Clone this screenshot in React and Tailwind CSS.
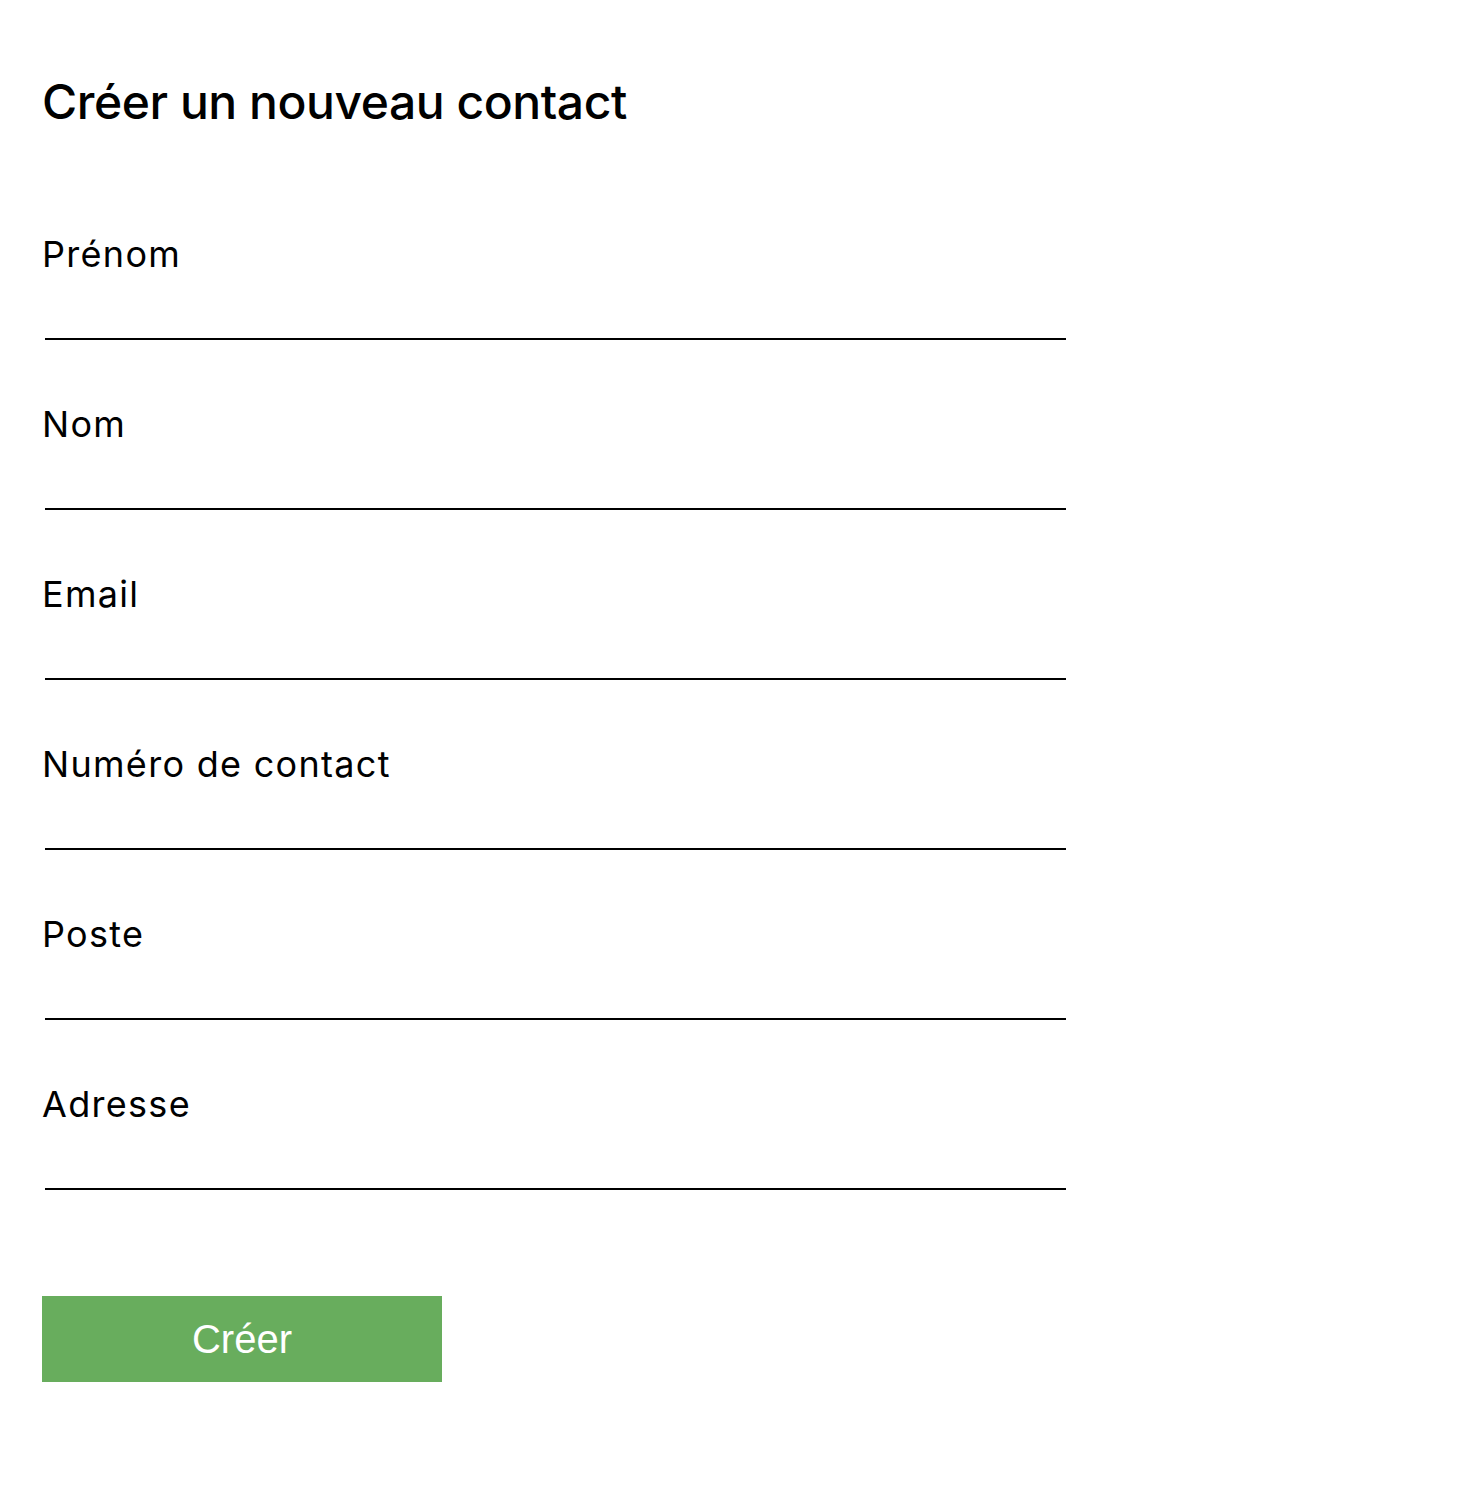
import React, { useState } from 'react';

const fields = [
  { id: 'firstName', label: 'Prénom' },
  { id: 'lastName', label: 'Nom' },
  { id: 'email', label: 'Email' },
  { id: 'phone', label: 'Numéro de contact' },
  { id: 'position', label: 'Poste' },
  { id: 'address', label: 'Adresse' },
];

const Field = ({ id, label, value, onChange }) => (
  <div className="flex flex-col">
    <label htmlFor={id} className="text-[36px] leading-[36px] tracking-[1.3px] text-black">
      {label}
    </label>
    <input
      id={id}
      type="text"
      value={value}
      onChange={(e) => onChange(id, e.target.value)}
      className="ml-[3px] w-[1021px] h-[68px] border-b-2 border-black bg-transparent text-[32px] outline-none"
    />
  </div>
);

export default function App() {
  const [values, setValues] = useState({});

  const handleChange = (id, v) => setValues((prev) => ({ ...prev, [id]: v }));

  return (
    <div
      className="min-h-[1510px] bg-white pl-[42px] pt-[78px] text-black"
      style={{ fontFamily: 'Inter, "Noto Sans", sans-serif' }}
    >
      <h1 className="text-[48px] leading-[48px] font-medium tracking-[-0.45px]">Créer un nouveau contact</h1>
      <form onSubmit={(e) => e.preventDefault()} className="mt-[110px] flex flex-col gap-[66px]">
        {fields.map((f) => (
          <Field key={f.id} {...f} value={values[f.id] || ''} onChange={handleChange} />
        ))}
        <button
          type="submit"
          className="mt-[40px] w-[400px] h-[86px] bg-[#68ad5d] text-white text-[40px]"
          style={{ fontFamily: '"Liberation Sans", Arial, sans-serif' }}
        >
          Créer
        </button>
      </form>
    </div>
  );
}
